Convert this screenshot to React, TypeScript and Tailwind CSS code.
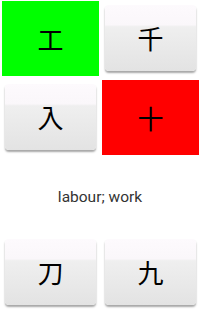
import React from "react";

const cjk = { fontFamily: '"Noto Sans CJK JP", "Noto Sans CJK SC", sans-serif', fontWeight: 400 };

function Colored({ ch, bg }: { ch: string; bg: string }) {
  return (
    <div className={`flex items-center justify-center h-full w-full ${bg}`}>
      <span className="text-[26px] leading-none text-black" style={cjk}>{ch}</span>
    </div>
  );
}

function Btn({ ch }: { ch: string }) {
  return (
    <div className="h-full w-full px-[3px] pt-[4px] pb-[5px]">
      <div className="h-full w-full rounded-[4px] flex items-center justify-center bg-[linear-gradient(to_bottom,#fdfafd_0%,#faf7fa_30%,#efefef_33%,#e3e3e3_100%)] shadow-[0_2px_2px_rgba(0,0,0,0.35)]">
        <span className="text-[26px] leading-none text-black" style={cjk}>{ch}</span>
      </div>
    </div>
  );
}

export default function App() {
  return (
    <div className="w-[200px] h-[310px] bg-white overflow-hidden flex flex-col pt-[1px]">
      <div className="grid grid-cols-[97px_97px] gap-x-[3px] pl-[2px] h-[76px]">
        <Colored ch="工" bg="bg-[#00ff00]" />
        <Btn ch="千" />
      </div>
      <div className="grid grid-cols-[97px_97px] gap-x-[3px] pl-[2px] h-[76px] mt-[4px]">
        <Btn ch="入" />
        <Colored ch="十" bg="bg-[#ff0000]" />
      </div>
      <div className="h-[81px] flex items-center justify-center pt-[6px]">
        <span className="text-[15.5px] text-[#333333]" style={{ fontFamily: "Roboto, sans-serif" }}>labour; work</span>
      </div>
      <div className="grid grid-cols-[97px_97px] gap-x-[3px] pl-[2px] h-[76px]">
        <Btn ch="刀" />
        <Btn ch="九" />
      </div>
    </div>
  );
}
